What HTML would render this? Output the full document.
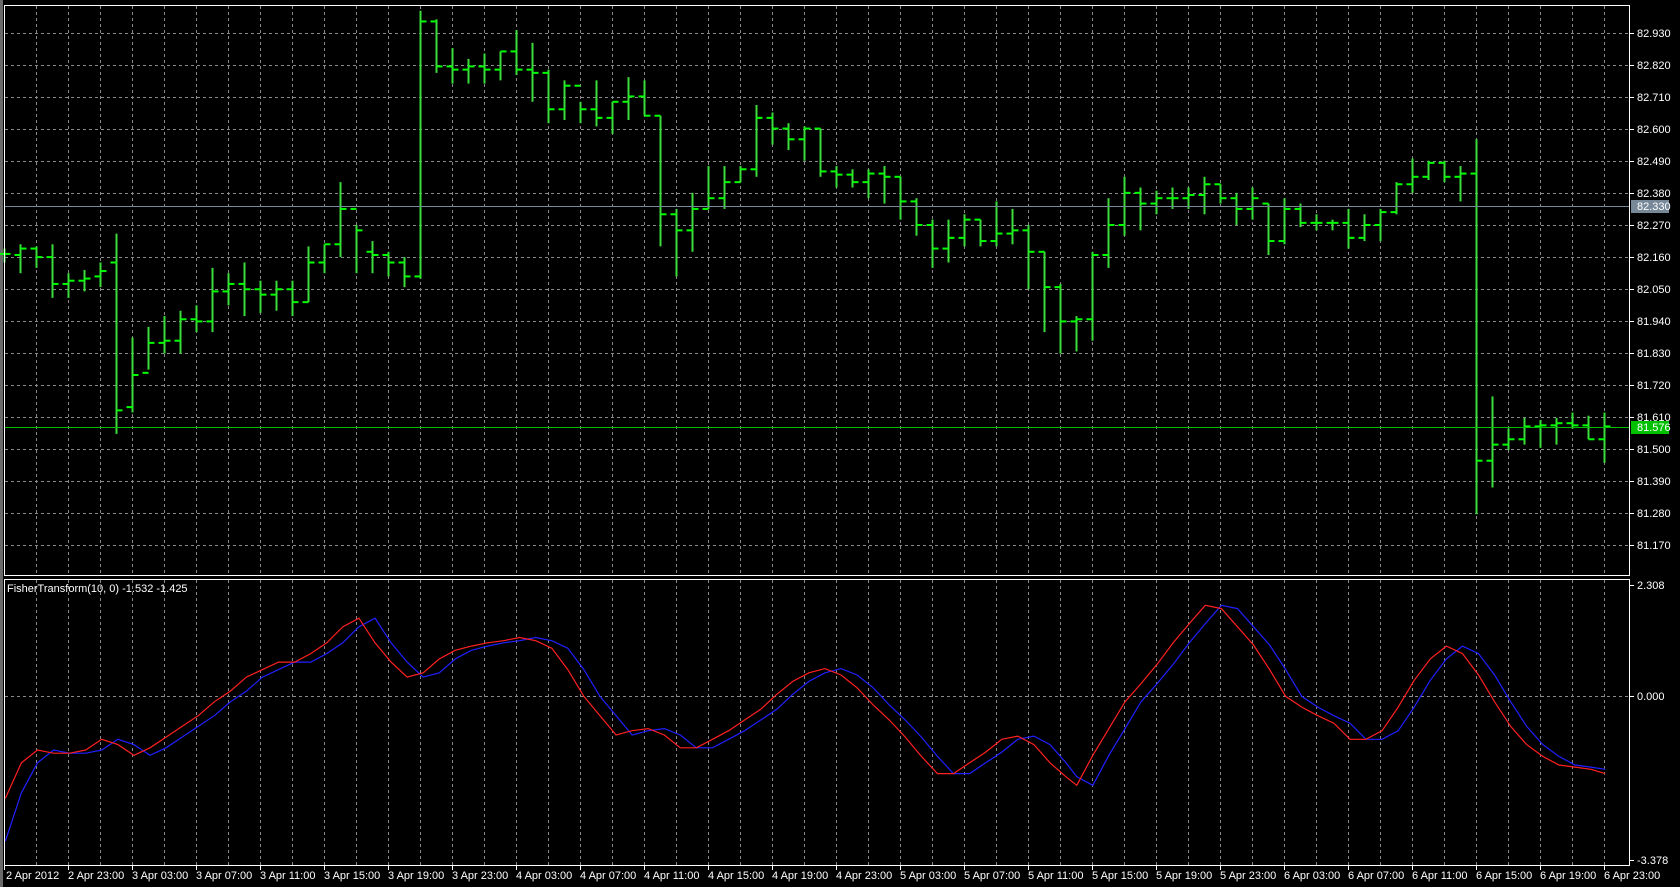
<!DOCTYPE html>
<html><head><meta charset="utf-8"><style>
html,body{margin:0;padding:0;background:#000;width:1680px;height:887px;overflow:hidden}
svg{position:absolute;left:0;top:0}
text{font-family:"Liberation Sans",sans-serif;font-size:11px;fill:#fff}
</style></head><body>
<svg id="s" width="1680" height="887" xmlns="http://www.w3.org/2000/svg">
<rect x="0" y="0" width="1680" height="887" fill="#000"/>
<rect x="0" y="0" width="3" height="887" fill="#6a6a6a"/>
<g id="grid" stroke="#8a8a8a" stroke-width="1" stroke-dasharray="3,3"></g>
<g id="bars" stroke="#3add3a" stroke-width="2"></g>
<line x1="4" y1="206.5" x2="1630" y2="206.5" stroke="#778899" stroke-width="1"/>
<line x1="4" y1="427.5" x2="1630" y2="427.5" stroke="#00c000" stroke-width="1"/>
<g id="fish" fill="none" stroke-width="1.2"></g>
<g fill="none" stroke="#fff" stroke-width="1">
<rect x="4.5" y="5.5" width="1625" height="570"/>
<rect x="4.5" y="579.5" width="1625" height="286"/>
</g>
<g id="ax" stroke="#fff"></g>
<rect x="1631" y="200" width="38" height="13" fill="#778899"/>
<rect x="1631" y="421" width="38" height="13" fill="#00c000"/>
<text x="7" y="592">FisherTransform(10, 0) -1.532 -1.425</text>
<text x="1637" y="589">2.308</text>
<text x="1637" y="700">0.000</text>
<text x="1637" y="864">-3.378</text>
<text x="1637" y="37">82.930</text><text x="1637" y="69">82.820</text><text x="1637" y="101">82.710</text><text x="1637" y="133">82.600</text><text x="1637" y="165">82.490</text><text x="1637" y="197">82.380</text><text x="1637" y="210">82.330</text><text x="1637" y="229">82.270</text><text x="1637" y="261">82.160</text><text x="1637" y="293">82.050</text><text x="1637" y="325">81.940</text><text x="1637" y="357">81.830</text><text x="1637" y="389">81.720</text><text x="1637" y="421">81.610</text><text x="1637" y="431">81.576</text><text x="1637" y="453">81.500</text><text x="1637" y="485">81.390</text><text x="1637" y="517">81.280</text><text x="1637" y="549">81.170</text>
<text x="6" y="879">2 Apr 2012</text><text x="68" y="879">2 Apr 23:00</text><text x="132" y="879">3 Apr 03:00</text><text x="196" y="879">3 Apr 07:00</text><text x="260" y="879">3 Apr 11:00</text><text x="324" y="879">3 Apr 15:00</text><text x="388" y="879">3 Apr 19:00</text><text x="452" y="879">3 Apr 23:00</text><text x="516" y="879">4 Apr 03:00</text><text x="580" y="879">4 Apr 07:00</text><text x="644" y="879">4 Apr 11:00</text><text x="708" y="879">4 Apr 15:00</text><text x="772" y="879">4 Apr 19:00</text><text x="836" y="879">4 Apr 23:00</text><text x="900" y="879">5 Apr 03:00</text><text x="964" y="879">5 Apr 07:00</text><text x="1028" y="879">5 Apr 11:00</text><text x="1092" y="879">5 Apr 15:00</text><text x="1156" y="879">5 Apr 19:00</text><text x="1220" y="879">5 Apr 23:00</text><text x="1284" y="879">6 Apr 03:00</text><text x="1348" y="879">6 Apr 07:00</text><text x="1412" y="879">6 Apr 11:00</text><text x="1476" y="879">6 Apr 15:00</text><text x="1540" y="879">6 Apr 19:00</text><text x="1604" y="879">6 Apr 23:00</text>
</svg>
<script>
var NS="http://www.w3.org/2000/svg";
function el(p,t,a){var e=document.createElementNS(NS,t);for(var k in a)e.setAttribute(k,a[k]);p.appendChild(e);return e;}
var g=document.getElementById('grid');
for(var x=36;x<1630;x+=32){el(g,'line',{x1:x+.5,y1:6,x2:x+.5,y2:575});el(g,'line',{x1:x+.5,y1:580,x2:x+.5,y2:865});}
for(var y=33;y<560;y+=32){el(g,'line',{x1:5,y1:y+.5,x2:1630,y2:y+.5});}
el(g,'line',{x1:5,y1:696.5,x2:1630,y2:696.5});
var ax=document.getElementById('ax');
for(var y=33;y<560;y+=32)el(ax,'line',{x1:1630,y1:y+.5,x2:1634,y2:y+.5});
[585,696,860].forEach(function(y){el(ax,'line',{x1:1630,y1:y+.5,x2:1634,y2:y+.5});});
for(var x=4;x<1630;x+=64)el(ax,'line',{x1:x+.5,y1:866,x2:x+.5,y2:870});
var B=[[232,245,237,237],[228,255,238,232],[230,250,232,240],[228,278,240,265],[255,278,265,262],[252,272,262,260],[245,268,258,253],[218,405,245,383],[315,385,380,350],[305,345,348,320],[295,330,320,318],[290,330,318,298],[285,310,298,300],[250,310,300,272],[255,285,272,265],[245,295,265,270],[262,292,270,275],[262,290,275,270],[262,295,270,282],[230,282,282,245],[228,255,245,228],[170,240,228,195],[210,255,195,215],[225,255,235,238],[235,258,238,245],[240,268,245,258],[10,260,258,20],[18,68,20,62],[45,78,62,65],[55,78,65,62],[50,78,62,65],[48,75,65,48],[28,70,48,65],[40,95,65,68],[65,115,68,102],[75,112,102,80],[95,115,80,102],[75,118,102,110],[95,125,110,95],[72,112,95,90],[75,108,90,108],[108,230,108,200],[195,258,200,215],[180,235,215,195],[155,195,195,185],[155,195,185,170],[155,170,170,158],[98,165,158,110],[105,135,110,120],[115,140,120,130],[118,150,130,120],[120,165,120,160],[155,175,160,163],[158,175,163,170],[158,185,170,162],[155,190,162,165],[165,205,165,188],[185,220,188,210],[205,250,210,232],[205,245,232,222],[200,230,222,205],[205,230,205,225],[188,230,225,218],[195,228,218,215],[210,270,215,235],[235,310,235,268],[265,330,268,300],[295,328,300,298],[235,318,298,238],[185,250,238,210],[165,220,210,180],[175,215,180,190],[178,200,190,185],[175,195,185,185],[175,195,185,182],[165,200,182,172],[172,190,172,185],[180,210,185,195],[175,205,195,185],[190,238,190,225],[185,228,225,195],[190,212,195,208],[200,215,208,208],[205,215,208,208],[195,232,208,222],[200,225,222,210],[195,225,210,198],[170,200,198,172],[148,180,172,165],[150,168,165,152],[150,170,152,165],[155,188,165,162],[130,480,162,430],[370,455,430,415],[400,420,415,410],[390,415,410,398],[392,418,398,397],[390,415,397,395],[385,400,395,397],[388,410,397,410],[385,432,410,398]];
var bg=document.getElementById('bars'),S=1.0714;
B.forEach(function(b,i){var x=4+i*16+.5;
el(bg,'line',{x1:x,y1:b[0]*S,x2:x,y2:b[1]*S});
el(bg,'line',{x1:x-6,y1:b[2]*S,x2:x,y2:b[2]*S,stroke:'#00ff00'});
el(bg,'line',{x1:x,y1:b[3]*S,x2:x+6,y2:b[3]*S,stroke:'#00ff00'});});
var R=[[5,745],[20,712],[35,700],[50,703],[65,703],[80,700],[95,690],[110,695],[125,705],[140,698],[155,688],[170,678],[185,668],[200,655],[215,645],[230,632],[245,625],[260,618],[275,618],[290,610],[305,600],[320,585],[335,577],[350,600],[365,618],[380,632],[395,628],[410,615],[425,607],[440,603],[455,600],[470,598],[485,595],[500,598],[515,605],[530,625],[545,650],[560,668],[575,686],[590,682],[605,680],[620,686],[635,698],[650,698],[665,690],[680,682],[695,672],[710,662],[725,648],[740,636],[755,628],[770,624],[785,630],[800,642],[815,658],[830,672],[845,688],[860,706],[875,722],[890,722],[905,712],[920,702],[935,690],[950,687],[965,695],[980,712],[995,725],[1005,733],[1020,705],[1035,680],[1050,655],[1065,638],[1080,620],[1095,600],[1110,582],[1125,565],[1140,568],[1155,585],[1170,602],[1185,625],[1200,650],[1215,660],[1230,668],[1245,675],[1260,690],[1275,690],[1290,682],[1305,660],[1320,635],[1335,615],[1350,603],[1365,610],[1380,630],[1395,655],[1410,678],[1425,695],[1440,706],[1455,714],[1470,716],[1485,718],[1498,722]];
var Bl=R.map(function(p,i){if(i==0)return [5,785];if(i==1)return [20,740];return [p[0],R[i-1][1]];});
function pts(a){return a.map(function(p){return (p[0]*S).toFixed(1)+','+(p[1]*S).toFixed(1)}).join(' ');}
var f=document.getElementById('fish');
el(f,'polyline',{points:pts(Bl),stroke:'#2020ff'});
el(f,'polyline',{points:pts(R),stroke:'#ff2020'});
</script>
</body></html>
